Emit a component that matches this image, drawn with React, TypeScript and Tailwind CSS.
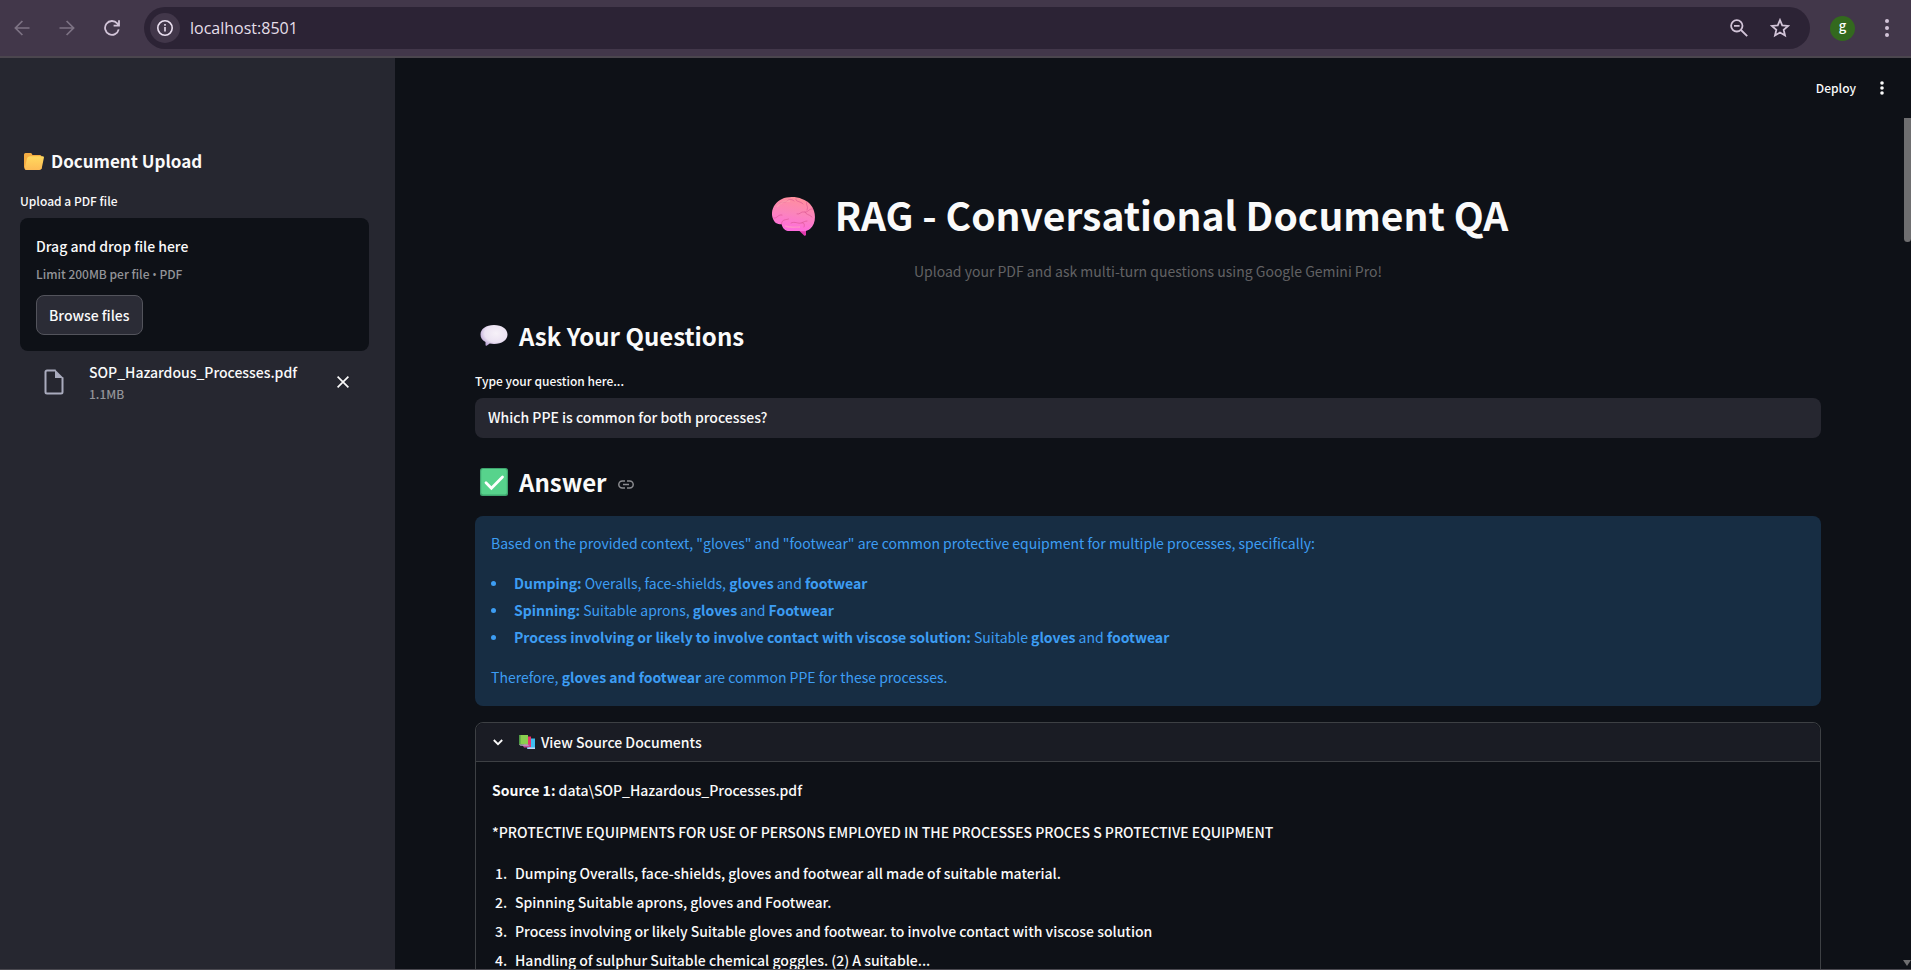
import type { ReactNode } from "react";

const sans = "font-['Noto_Sans_CJK_SC','Open_Sans',sans-serif]";

function BrowserBar() {
  return (
    <div className="flex h-[58px] shrink-0 items-center border-b-2 border-[#4b464e] bg-[#42374a] pl-3 pr-[14px] text-[#d2c4d8]">
      <button aria-label="Back" className="flex size-5 items-center justify-center text-[#7d7384]">
        <svg width="16" height="16" viewBox="0 0 16 16" fill="none" stroke="currentColor" strokeWidth="1.7">
          <path d="M15.5 8H1.5M8.4 1 1.4 8l7 7" />
        </svg>
      </button>
      <button aria-label="Forward" className="ml-[25px] flex size-5 items-center justify-center text-[#7d7384]">
        <svg width="16" height="16" viewBox="0 0 16 16" fill="none" stroke="currentColor" strokeWidth="1.7">
          <path d="M.5 8h14M7.6 1l7 7-7 7" />
        </svg>
      </button>
      <button aria-label="Reload" className="ml-[25px] flex size-5 items-center justify-center">
        <svg width="16" height="16" viewBox="0 0 16 16" fill="none" stroke="currentColor" strokeWidth="1.8">
          <path d="M14.7 9.4A6.9 6.9 0 1 1 13.2 3.4L14.9 5.3M15 .3V5.6H9.6" />
        </svg>
      </button>
      <div className="ml-[22px] flex h-[42px] flex-1 items-center rounded-full bg-[#2c2335] pl-[6px] pr-5">
        <button aria-label="View site information" className="flex size-[30px] items-center justify-center rounded-full bg-[#42374a] text-[#eadff0]">
          <svg width="16" height="16" viewBox="0 0 16 16" fill="none" stroke="currentColor" strokeWidth="1.6">
            <circle cx="8" cy="8" r="7.2" />
            <path d="M8 7v4.6M8 4v1.8" />
          </svg>
        </button>
        <input
          aria-label="Address"
          defaultValue="localhost:8501"
          className="ml-[10px] min-w-0 flex-1 bg-transparent font-['Open_Sans',sans-serif] text-[16px] leading-6 text-[#e6dfe9] outline-none"
        />
        <button aria-label="Zoom" className="flex size-5 items-center justify-center">
          <svg width="18" height="18" viewBox="0 0 18 18" fill="none" stroke="currentColor" strokeWidth="1.8">
            <circle cx="6.8" cy="6.8" r="5.7" />
            <path d="m11 11 6.2 6.2M4 6.8h5.6" />
          </svg>
        </button>
        <button aria-label="Bookmark this page" className="ml-[21px] flex size-5 items-center justify-center">
          <svg width="20" height="20" viewBox="0 0 18 18" fill="none" stroke="currentColor" strokeWidth="1.6">
            <path d="m9 1.8 2 4.8 5.3.5-4 3.5 1.2 5.1L9 13l-4.5 2.7 1.2-5.1-4-3.5L7 6.6Z" />
          </svg>
        </button>
      </div>
      <button
        aria-label="Profile"
        className={`ml-5 flex size-[25px] items-center justify-center rounded-full bg-[#33691e] pb-1 text-[13px] font-medium leading-5 text-white ${sans}`}
      >
        g
      </button>
      <button aria-label="Browser menu" className="ml-[22px] flex size-5 items-center justify-center">
        <svg width="4" height="18" viewBox="0 0 4 18" fill="currentColor">
          <circle cx="2" cy="2" r="2" />
          <circle cx="2" cy="9" r="2" />
          <circle cx="2" cy="16" r="2" />
        </svg>
      </button>
    </div>
  );
}

function FolderIcon() {
  return (
    <svg width="20" height="17" viewBox="0 0 20 17" aria-hidden="true">
      <defs>
        <linearGradient id="folder" x1="0" y1="0" x2="0" y2="1">
          <stop offset="0" stopColor="#ffd95e" />
          <stop offset="1" stopColor="#fdbb55" />
        </linearGradient>
      </defs>
      <path d="M0 1.5Q0 0 1.5 0H6.6Q7.6 0 8 1l.4 1H16q1.5 0 1.5 1.5V16H2Q0 16 0 14Z" fill="#f4ac42" />
      <path d="M6.3 3.3H18.6q1.6 0 1.3 1.5L17.8 15q-.4 2-2.4 2H2.2Q.4 17 .8 15L2.9 6Q3.5 3.3 6.3 3.3Z" fill="url(#folder)" />
    </svg>
  );
}

function BrainIcon() {
  return (
    <svg width="43" height="39" viewBox="0 0 43 39" aria-hidden="true">
      <defs>
        <linearGradient id="brain" x1=".6" y1="0" x2=".4" y2="1">
          <stop offset="0" stopColor="#ff8f9b" />
          <stop offset=".5" stopColor="#fb84bd" />
          <stop offset="1" stopColor="#ff6ae0" />
        </linearGradient>
      </defs>
      <path d="M26 32h8v6q-.8 1.500-2.200.3L27 33.500Z" fill="#e23cb0" />
      <path
        d="M0 18C-.5 11 4 4.500 10 2 15-.5 24-.7 30 2c7 2.500 10.500 7 12 12 2 6 1 14-4 18-3 2.500-7 2.500-10 2H17c-3 0-6-1.500-7.500-7C5 28 1 25 0 18Z"
        fill="url(#brain)"
      />
      <g fill="none" stroke="#d9528f" strokeWidth=".8" strokeLinecap="round" opacity=".75">
        <path d="M7 7c3-3 6-1 8-3s5-2 7 0M24 2c-1 3 5 2 7 5M41 12c-4-1-5 4-9 3-3-1-4 3-7 2M35 5c-2 3 2 4 0 8M2 21c3 1 4-4 8-3M9.500 27c0-5 5-4 7-5M19 26c4-2 7 1 10 0s4-2 6-2M30 26c2-1 3 2 2 4M33 15c1 3 4 2 7 5" />
      </g>
      <path d="M5 10C9 4 14 4 18 4M13 29c5 2 10 1 15 1" fill="none" stroke="#ffb0b8" strokeWidth="1.500" opacity=".5" />
    </svg>
  );
}

function BubbleIcon() {
  return (
    <svg width="28" height="22" viewBox="0 0 28 22" aria-hidden="true">
      <defs>
        <radialGradient id="bubble" cx=".58" cy=".4" r=".65">
          <stop offset="0" stopColor="#f6f1f8" />
          <stop offset=".65" stopColor="#ebe2f2" />
          <stop offset="1" stopColor="#b9a3d3" />
        </radialGradient>
      </defs>
      <path d="M14 0c8 0 13.500 4 13.500 9.500S22 19 14 19c-1.500 0-3-.1-4.300-.4L7 20.600q-1.500.8-1.500-.8V17C2 15.200.5 12.700.5 9.500.5 4 6 0 14 0Z" fill="url(#bubble)" />
    </svg>
  );
}

function CheckIcon() {
  return (
    <svg width="28" height="28" viewBox="0 0 28 28" aria-hidden="true">
      <rect width="28" height="28" rx="2.500" fill="#3fa56f" />
      <rect x="1.200" y="1" width="25.600" height="25.500" rx="2" fill="#57d38c" />
      <path d="m6 14.800 5.400 5.400L22.500 9" fill="none" stroke="#fff" strokeWidth="2.800" strokeLinecap="round" />
    </svg>
  );
}

function BooksIcon() {
  return (
    <svg width="16" height="15" viewBox="0 0 16 15" aria-hidden="true">
      <path d="M9 3.500h7V14H8Z" fill="#3fbdf0" />
      <path d="M8 12.500h8V14H9Z" fill="#c4d7f5" />
      <path d="M5 1.500h7V12H5Z" fill="#e8336d" />
      <path d="M3 9.500h9l-2.500 3H5Z" fill="#c04c9c" />
      <path d="M0 0h9v9.500H0Z" fill="#8ace50" />
      <path d="M0 0h1.500v9.500H0Z" fill="#4f9a44" />
      <path d="M0 9.500h9l1 1.200H1.500Z" fill="#b5aec8" />
    </svg>
  );
}

function Sidebar() {
  return (
    <aside className="w-[395px] shrink-0 bg-[#262730] px-5 pt-[88px]">
      <h2 className="flex items-center gap-[7px] pl-1 text-[17px] font-bold leading-[30px]">
        <FolderIcon />
        Document Upload
      </h2>
      <label htmlFor="pdf" className="mt-[15px] block text-[12px] font-medium leading-5">
        Upload a PDF file
      </label>
      <div className="mr-[6px] mt-[7px] rounded-lg bg-[#0e1117] p-4">
        <div className="text-[14px] font-medium leading-6">Drag and drop file here</div>
        <div className="mt-[6px] text-[12px] font-medium leading-5 text-[#939498]">
          Limit 200MB per file <span className="font-['Open_Sans',sans-serif]">•</span> PDF
        </div>
        <button
          id="pdf"
          type="button"
          className="mt-[10px] h-10 rounded-lg border border-[#53545c] bg-[#2b2c36] px-3 text-[14px] font-medium leading-6"
        >
          Browse files
        </button>
      </div>
      <div className="mr-[6px] flex items-center pl-6 pr-5 pt-[9px]">
        <svg width="20" height="26" viewBox="0 0 20 26" aria-hidden="true">
          <path d="M11.500 1.500H3A1.500 1.500 0 0 0 1.500 3v20A1.500 1.500 0 0 0 3 24.500h14a1.500 1.500 0 0 0 1.500-1.500V8.500" fill="none" stroke="#a9abbd" strokeWidth="2" />
          <path d="M11 .500 19.500 9H11Z" fill="#a9abbd" />
        </svg>
        <div className="ml-[25px] flex-1">
          <div className="text-[14px] font-medium leading-6">SOP_Hazardous_Processes.pdf</div>
          <div className="text-[12px] font-medium leading-5 text-[#939498]">1.1MB</div>
        </div>
        <button aria-label="Remove file" className="flex size-3 items-center justify-center">
          <svg width="12" height="12" viewBox="0 0 12 12" stroke="currentColor" strokeWidth="1.700">
            <path d="m.6.6 10.800 10.800M11.400.6.6 11.400" />
          </svg>
        </button>
      </div>
    </aside>
  );
}

function Bullet({ children }: { children: ReactNode }) {
  return (
    <li className="flex items-center">
      <span className="mr-[18px] size-[5px] rounded-full bg-[#3d9df3]" />
      <span>{children}</span>
    </li>
  );
}

const sources = [
  "Dumping Overalls, face-shields, gloves and footwear all made of suitable material.",
  "Spinning Suitable aprons, gloves and Footwear.",
  "Process involving or likely Suitable gloves and footwear. to involve contact with viscose solution",
  "Handling of sulphur Suitable chemical goggles. (2) A suitable...",
];

function Main() {
  return (
    <main className="relative flex min-w-0 flex-1 flex-col overflow-hidden bg-[#0e1117]">
      <header className="flex h-[60px] shrink-0 items-center justify-end gap-6 pr-[27px]">
        <button className="text-[12px] font-medium leading-5">Deploy</button>
        <button aria-label="App menu">
          <svg width="4" height="14" viewBox="0 0 4 14" fill="currentColor">
            <circle cx="2" cy="2" r="1.800" />
            <circle cx="2" cy="7" r="1.800" />
            <circle cx="2" cy="12" r="1.800" />
          </svg>
        </button>
      </header>
      <div className="min-h-0 flex-1 overflow-hidden pl-20 pr-[90px] pt-[72px]">
        <h1 className="flex items-center justify-center gap-5 pr-4 text-[39px] font-bold leading-[48px]">
          <span className="pt-1">
            <BrainIcon />
          </span>
          RAG - Conversational Document QA
        </h1>
        <p className="mt-[21px] text-center text-[14px] leading-6 text-[#626264]">
          Upload your PDF and ask multi-turn questions using Google Gemini Pro!
        </p>
        <h2 className="mt-[35px] flex items-center gap-[11px] pl-[5px] text-[24px] font-bold leading-9">
          <BubbleIcon />
          Ask Your Questions
        </h2>
        <label htmlFor="question" className="mt-[17px] block text-[12px] font-medium leading-5">
          Type your question here...
        </label>
        <input
          id="question"
          defaultValue="Which PPE is common for both processes?"
          className="mt-[7px] block h-10 w-full rounded-lg bg-[#262730] px-[13px] pb-[2px] text-[14px] font-medium leading-6 outline-none"
        />
        <h2 className="mt-[26px] flex items-center gap-[11px] pl-[5px] text-[24px] font-bold leading-9">
          <CheckIcon />
          Answer
          <a href="#answer" aria-label="Link to heading" className="pt-1 text-[#8b8c90]">
            <svg width="16" height="9" viewBox="0 0 16 9" fill="none" stroke="currentColor" strokeWidth="1.500">
              <path d="M7 1H4.300a3.500 3.500 0 0 0 0 7H7M9 1h2.700a3.500 3.500 0 0 1 0 7H9M5 4.500h6" />
            </svg>
          </a>
        </h2>
        <section
          id="answer"
          className="mt-4 flex flex-col gap-4 rounded-lg bg-[#172d43] px-4 pb-[17px] pt-[15px] text-[14px] leading-6 text-[#3d9df3]"
        >
          <p>
            Based on the provided context, "gloves" and "footwear" are common protective equipment for multiple
            processes, specifically:
          </p>
          <ul className="flex flex-col gap-[3px]">
            <Bullet>
              <b>Dumping:</b> Overalls, face-shields, <b>gloves</b> and <b>footwear</b>
            </Bullet>
            <Bullet>
              <b>Spinning:</b> Suitable aprons, <b>gloves</b> and <b>Footwear</b>
            </Bullet>
            <Bullet>
              <b>Process involving or likely to involve contact with viscose solution:</b> Suitable <b>gloves</b> and{" "}
              <b>footwear</b>
            </Bullet>
          </ul>
          <p>
            Therefore, <b>gloves and footwear</b> are common PPE for these processes.
          </p>
        </section>
        <section className="mt-4 rounded-lg border border-[#3d4044]">
          <button className="flex h-[39px] w-full items-center rounded-t-lg border-b border-[#3d4044] bg-[#1a1c24] pl-[17px] text-[14px] font-medium leading-6">
            <svg width="10" height="7" viewBox="0 0 10 7" fill="none" stroke="currentColor" strokeWidth="1.800">
              <path d="m.8 1 4.200 4.200L9.200 1" />
            </svg>
            <span className="ml-4 mr-[6px]">
              <BooksIcon />
            </span>
            View Source Documents
          </button>
          <div className="px-4 pb-4 pt-4 text-[14px] font-medium leading-6">
            <p>
              <b>Source 1:</b> data\SOP_Hazardous_Processes.pdf
            </p>
            <p className="mt-[18px]">
              *PROTECTIVE EQUIPMENTS FOR USE OF PERSONS EMPLOYED IN THE PROCESSES PROCES S PROTECTIVE EQUIPMENT
            </p>
            <ol className="mt-[19px] flex flex-col gap-[9px] leading-5">
              {sources.map((s, i) => (
                <li key={s} className="flex">
                  <span className="w-[23px] shrink-0 pl-[3px]">{i + 1}.</span>
                  <span>{s}</span>
                </li>
              ))}
            </ol>
          </div>
        </section>
      </div>
      <div className="absolute right-0 top-[60px] h-[124px] w-[7px] rounded-b bg-[#6e6e70]" />
      <svg className="absolute bottom-[3px] right-0" width="8" height="6" viewBox="0 0 8 6" aria-hidden="true">
        <path d="M0 0h8L4 6Z" fill="#6e6e70" />
      </svg>
    </main>
  );
}

export default function App() {
  return (
    <div className={`flex h-screen flex-col overflow-hidden border-b border-[#4a4950] text-[#fafafa] ${sans}`}>
      <BrowserBar />
      <div className="flex min-h-0 flex-1">
        <Sidebar />
        <Main />
      </div>
    </div>
  );
}
